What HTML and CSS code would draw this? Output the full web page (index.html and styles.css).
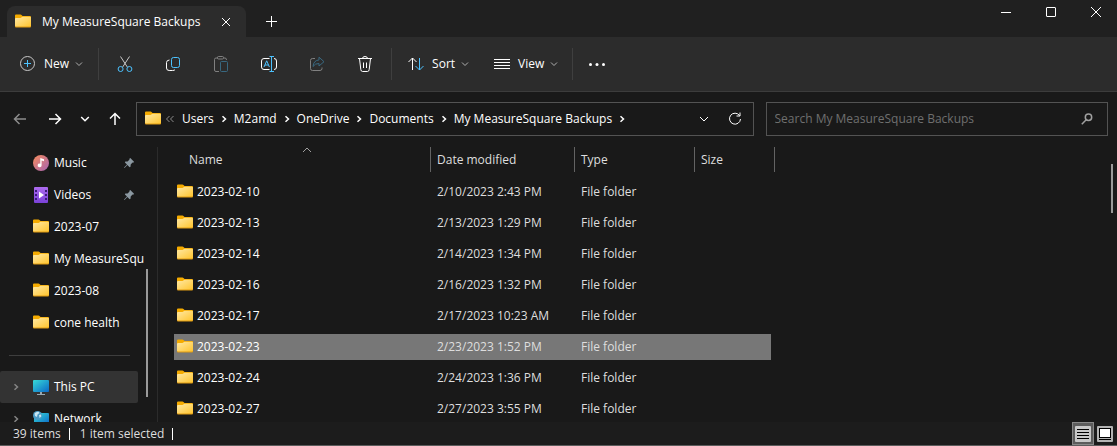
FILE: index.html
```html
<!DOCTYPE html>
<html lang="en">

<head>
    <meta charset="UTF-8">
    <meta name="viewport" content="width=device-width, initial-scale=1.0">
    <title>My MeasureSquare Backups</title>
    <link rel="stylesheet" href="styles.css">
</head>

<body>
    <!-- Shared icons -->
    <svg class="sprite" aria-hidden="true">
        <defs>
            <linearGradient id="folder-front" x1="0" y1="0" x2="1" y2="1">
                <stop offset="0" stop-color="#ffe9a6" />
                <stop offset="1" stop-color="#ffc52f" />
            </linearGradient>
            <linearGradient id="screen" x1="0" y1="0" x2="1" y2="1">
                <stop offset="0" stop-color="#37dbd7" />
                <stop offset="1" stop-color="#0b68c8" />
            </linearGradient>
            <linearGradient id="music-disc" x1="0" y1="0" x2="1" y2="1">
                <stop offset="0" stop-color="#f78c5c" />
                <stop offset="1" stop-color="#a763b2" />
            </linearGradient>
            <linearGradient id="film" x1="0" y1="0" x2="0" y2="1">
                <stop offset="0" stop-color="#ad6bf0" />
                <stop offset="1" stop-color="#7a41d8" />
            </linearGradient>
        </defs>
        <symbol id="folder" viewBox="0 0 16 16">
            <path fill="#f5ab00" d="M0 1.500Q0 .5 1 .5H5.500Q6 .5 6.500 1L7.500 2H15Q16 2 16 3V12H0z" />
            <path fill="#e09b12" d="M0 11H16V12.500Q16 13.500 15 13.500H1Q0 13.500 0 12.500z" />
            <path fill="url(#folder-front)" d="M0 5Q0 4 1 4H5.500L7.500 2.700H15Q16 2.700 16 3.700V11.500Q16 12.500 15 12.500H1Q0 12.500 0 11.500z" />
        </symbol>
        <symbol id="chevron-down" viewBox="0 0 10 10">
            <path d="M2 3.500L5 6.500L8 3.500" />
        </symbol>
        <symbol id="chevron-right" viewBox="0 0 10 10">
            <path d="M3.500 2.200L6.500 5L3.500 7.800" />
        </symbol>
        <symbol id="pin" viewBox="0 0 12 12">
            <path fill="#8b98a1" d="M7.300 1L11 4.700L10.300 5.700L9.500 5.600L7.700 7.500L7.500 9.800L6.600 10.200L4.400 8L1.500 11L1 10.500L4 7.600L1.900 5.500L2.300 4.600L4.600 4.400L6.500 2.500L6.400 1.700z" />
        </symbol>
    </svg>

    <header class="titlebar">
        <div class="tab">
            <svg class="icon"><use href="#folder" /></svg>
            <span class="tab-title">My MeasureSquare Backups</span>
            <button class="tab-close" aria-label="Close tab">
                <svg class="line" width="10" height="10" viewBox="0 0 10 10"><path d="M1 1L9 9M9 1L1 9" /></svg>
            </button>
        </div>
        <button class="new-tab" aria-label="New tab">
            <svg class="line" width="11" height="11" viewBox="0 0 11 11"><path d="M5.500 0V11M0 5.500H11" /></svg>
        </button>
        <div class="window-buttons">
            <button aria-label="Minimize">
                <svg class="line" width="10" height="10" viewBox="0 0 10 10"><path d="M0 5.500H10" /></svg>
            </button>
            <button aria-label="Maximize">
                <svg class="line" width="10" height="10" viewBox="0 0 10 10"><rect x=".5" y=".5" width="9" height="9" rx=".5" /></svg>
            </button>
            <button aria-label="Close">
                <svg class="line" width="10" height="10" viewBox="0 0 10 10"><path d="M0 0L10 10M10 0L0 10" /></svg>
            </button>
        </div>
    </header>

    <div class="toolbar">
        <button class="tool-text tool-new">
            <svg class="line" width="16" height="16" viewBox="0 0 16 16">
                <circle cx="7.500" cy="7.500" r="7" stroke="#c8c8c8" />
                <path class="blue" d="M7.500 4V11M4 7.500H11" />
            </svg>
            New
            <svg class="line chevron"><use href="#chevron-down" /></svg>
        </button>
        <button class="tool" aria-label="Cut">
            <svg class="line" width="16" height="16" viewBox="0 0 16 16">
                <path d="M3.500 .5L10.300 11M12.500 .5L5.700 11" stroke="#c8c8c8" />
                <circle class="blue" cx="3.600" cy="13" r="2.500" />
                <circle class="blue" cx="12.400" cy="13" r="2.500" />
            </svg>
        </button>
        <button class="tool" aria-label="Copy">
            <svg class="line" width="16" height="16" viewBox="0 0 16 16">
                <rect class="blue" x="6.500" y="1.500" width="8" height="10" rx="2" />
                <path d="M4.500 4Q1.500 4.200 1.500 6.500V12Q1.500 14.500 4.200 14.500H7.500Q9.700 14.500 10 13.500" />
            </svg>
        </button>
        <button class="tool" aria-label="Paste" disabled>
            <svg class="line" width="16" height="16" viewBox="0 0 16 16">
                <path d="M5 2H3Q1.500 2 1.500 3.500V14Q1.500 15.500 3 15.500H6M10.500 2H12Q13.500 2 13.500 4" />
                <rect x="4.500" y=".5" width="6" height="2.500" rx="1" />
                <rect class="blue" x="7.500" y="5.500" width="7" height="10" rx="1" />
            </svg>
        </button>
        <button class="tool" aria-label="Rename">
            <svg class="line" width="16" height="16" viewBox="0 0 16 16">
                <path d="M8.500 2.500H3Q.5 2.500 .5 5V11Q.5 13.500 3 13.500H8.500M13 2.500Q15.500 2.500 15.500 5V11Q15.500 13.500 13 13.500" />
                <path class="blue" d="M3 11L5.700 4.800L8.400 11M4 9H7.500M8.500 .5H13M10.500 .5V15.500M8.500 15.500H13" />
            </svg>
        </button>
        <button class="tool" aria-label="Share" disabled>
            <svg class="line" width="16" height="16" viewBox="0 0 16 16">
                <path d="M6 2.500H3.500Q1.500 2.500 1.500 4.500V12.500Q1.500 14.500 3.500 14.500H11Q13 14.500 13 12.500V11.500" />
                <path class="blue" d="M10 1.200L15 5.700L10 10V7.500Q6 7.300 4 10.500Q4.500 4.500 10 3.900z" />
            </svg>
        </button>
        <button class="tool" aria-label="Delete">
            <svg class="line" width="16" height="16" viewBox="0 0 16 16">
                <path d="M1 2.500H15M5.500 2.500Q5.500 .5 8 .5T10.500 2.500M2.500 2.700L3.800 13.500Q4 15.500 5.500 15.500H10.500Q12 15.500 12.200 13.500L13.500 2.700M6.500 6.500V12M9.500 6.500V12" />
            </svg>
        </button>
        <button class="tool-text tool-sort">
            <svg class="line" width="16" height="16" viewBox="0 0 16 16">
                <path d="M4.500 14V2M.5 6L4.500 2L8.500 6" />
                <path class="blue" d="M11.500 2V14M7.500 10L11.500 14L15.500 10" />
            </svg>
            Sort
            <svg class="line chevron"><use href="#chevron-down" /></svg>
        </button>
        <button class="tool-text tool-view">
            <svg class="line" width="16" height="16" viewBox="0 0 16 16">
                <path d="M0 3.500H16M0 6.500H16M0 9.500H16M0 12.500H16" />
            </svg>
            View
            <svg class="line chevron"><use href="#chevron-down" /></svg>
        </button>
        <button class="tool" aria-label="See more">
            <svg width="16" height="16" viewBox="0 0 16 16" fill="#fff">
                <circle cx="1.500" cy="8.500" r="1.500" />
                <circle cx="8" cy="8.500" r="1.500" />
                <circle cx="14.500" cy="8.500" r="1.500" />
            </svg>
        </button>
    </div>

    <div class="navigation">
        <div class="nav-buttons">
            <button aria-label="Back" class="dim">
                <svg class="line bold" width="14" height="14" viewBox="0 0 14 14"><path d="M13 7H1.500M6.500 2L1.500 7L6.500 12" /></svg>
            </button>
            <button aria-label="Forward">
                <svg class="line bold" width="14" height="14" viewBox="0 0 14 14"><path d="M1 7H12.500M7.500 2L12.500 7L7.500 12" /></svg>
            </button>
            <button aria-label="Recent locations">
                <svg class="line bold" width="10" height="10" viewBox="0 0 10 10"><path d="M1.200 3L5 6.800L8.800 3" /></svg>
            </button>
            <button aria-label="Up">
                <svg class="line bold" width="14" height="14" viewBox="0 0 14 14"><path d="M7 13V1.500M2 6.500L7 1.500L12 6.500" /></svg>
            </button>
        </div>
        <nav class="address" aria-label="Address">
            <svg class="icon"><use href="#folder" /></svg>
            <svg class="line dim overflow" width="10" height="10" viewBox="0 0 10 10"><path d="M4.500 2L1.500 5L4.500 8M8.500 2L5.500 5L8.500 8" /></svg>
            <a href="#">Users</a>
            <svg class="line separator"><use href="#chevron-right" /></svg>
            <a href="#">M2amd</a>
            <svg class="line separator"><use href="#chevron-right" /></svg>
            <a href="#">OneDrive</a>
            <svg class="line separator"><use href="#chevron-right" /></svg>
            <a href="#">Documents</a>
            <svg class="line separator"><use href="#chevron-right" /></svg>
            <a href="#">My MeasureSquare Backups</a>
            <svg class="line separator"><use href="#chevron-right" /></svg>
            <div class="address-buttons">
                <button aria-label="Previous locations">
                    <svg class="line" width="10" height="10" viewBox="0 0 10 10"><path d="M1 3L5 7L9 3" /></svg>
                </button>
                <button aria-label="Refresh">
                    <svg class="line" width="14" height="14" viewBox="0 0 14 14"><path d="M11.500 3.500A5.500 5.500 0 1 0 12.500 7M12 .5V4H8.500" /></svg>
                </button>
            </div>
        </nav>
        <form class="search">
            <input type="search" aria-label="Search" placeholder="Search My MeasureSquare Backups">
            <button type="button" aria-label="Search">
                <svg class="line" width="12" height="12" viewBox="0 0 12 12" stroke-width="1.500"><circle cx="7.500" cy="4.300" r="3.200" /><path d="M5.200 6.700L.8 11.200" /></svg>
            </button>
        </form>
    </div>

    <div class="content">
        <aside class="sidebar">
            <div class="sidebar-items">
                <a href="#" class="sidebar-item">
                    <svg class="icon" viewBox="0 0 16 16">
                        <circle cx="8" cy="8" r="8" fill="url(#music-disc)" />
                        <path fill="#fff" d="M7.300 3L11 4.300V6.300L8.600 5.500V10.500A2 1.800 0 1 1 7.300 8.800z" />
                    </svg>
                    <span>Music</span>
                    <svg class="pin"><use href="#pin" /></svg>
                </a>
                <a href="#" class="sidebar-item">
                    <svg class="icon" viewBox="0 0 16 16">
                        <rect x="1" width="14" height="16" rx="1" fill="url(#film)" />
                        <path fill="#3c1b7c" d="M2 3H4V5H2zM2 7H4V9H2zM2 11H4V13H2zM12 3H14V5H12zM12 7H14V9H12zM12 11H14V13H12z" />
                        <path fill="#fff" d="M6 4.500L11 8L6 11.500z" />
                    </svg>
                    <span>Videos</span>
                    <svg class="pin"><use href="#pin" /></svg>
                </a>
                <a href="#" class="sidebar-item">
                    <svg class="icon"><use href="#folder" /></svg>
                    <span>2023-07</span>
                </a>
                <a href="#" class="sidebar-item">
                    <svg class="icon"><use href="#folder" /></svg>
                    <span>My MeasureSqu</span>
                </a>
                <a href="#" class="sidebar-item">
                    <svg class="icon"><use href="#folder" /></svg>
                    <span>2023-08</span>
                </a>
                <a href="#" class="sidebar-item">
                    <svg class="icon"><use href="#folder" /></svg>
                    <span>cone health</span>
                </a>
                <hr>
                <a href="#" class="sidebar-item root active">
                    <svg class="line expand"><use href="#chevron-right" /></svg>
                    <svg class="icon" viewBox="0 0 16 16">
                        <path fill="#9aa7b0" d="M7 13H9V15H12V16H4V15H7z" />
                        <rect y="1" width="16" height="12" rx="1" fill="url(#screen)" />
                    </svg>
                    <span>This PC</span>
                </a>
                <a href="#" class="sidebar-item root">
                    <svg class="line expand"><use href="#chevron-right" /></svg>
                    <svg class="icon" viewBox="0 0 16 16">
                        <path fill="#9aa7b0" d="M7 13H9V15H12V16H4V15H7z" />
                        <rect x="1" y="2" width="15" height="11" rx="1" fill="url(#screen)" />
                        <circle cx="4.500" cy="4.500" r="4.500" fill="#4b9ac5" />
                        <path fill="#c9e6f2" d="M1.500 2.500Q3 .5 5.500 .7L6.500 2L4.500 3.500L4 6L2 5zM6 4L8 3.500L8.300 5.500L6.500 7z" />
                    </svg>
                    <span>Network</span>
                </a>
            </div>
            <div class="sidebar-track"><div class="thumb"></div></div>
        </aside>

        <main class="files">
            <table>
                <thead>
                    <tr>
                        <th class="col-name">
                            Name
                            <svg class="line sort-mark" width="10" height="6" viewBox="0 0 10 6"><path d="M1 5L5 1L9 5" /></svg>
                        </th>
                        <th class="col-date">Date modified</th>
                        <th class="col-type">Type</th>
                        <th class="col-size">Size</th>
                    </tr>
                </thead>
                <tbody>
                    <tr>
                        <td><div class="name"><svg class="icon"><use href="#folder" /></svg>2023-02-10</div></td>
                        <td>2/10/2023 2:43 PM</td>
                        <td>File folder</td>
                        <td></td>
                    </tr>
                    <tr>
                        <td><div class="name"><svg class="icon"><use href="#folder" /></svg>2023-02-13</div></td>
                        <td>2/13/2023 1:29 PM</td>
                        <td>File folder</td>
                        <td></td>
                    </tr>
                    <tr>
                        <td><div class="name"><svg class="icon"><use href="#folder" /></svg>2023-02-14</div></td>
                        <td>2/14/2023 1:34 PM</td>
                        <td>File folder</td>
                        <td></td>
                    </tr>
                    <tr>
                        <td><div class="name"><svg class="icon"><use href="#folder" /></svg>2023-02-16</div></td>
                        <td>2/16/2023 1:32 PM</td>
                        <td>File folder</td>
                        <td></td>
                    </tr>
                    <tr>
                        <td><div class="name"><svg class="icon"><use href="#folder" /></svg>2023-02-17</div></td>
                        <td>2/17/2023 10:23 AM</td>
                        <td>File folder</td>
                        <td></td>
                    </tr>
                    <tr class="selected">
                        <td><div class="name"><svg class="icon"><use href="#folder" /></svg>2023-02-23</div></td>
                        <td>2/23/2023 1:52 PM</td>
                        <td>File folder</td>
                        <td></td>
                    </tr>
                    <tr>
                        <td><div class="name"><svg class="icon"><use href="#folder" /></svg>2023-02-24</div></td>
                        <td>2/24/2023 1:36 PM</td>
                        <td>File folder</td>
                        <td></td>
                    </tr>
                    <tr>
                        <td><div class="name"><svg class="icon"><use href="#folder" /></svg>2023-02-27</div></td>
                        <td>2/27/2023 3:55 PM</td>
                        <td>File folder</td>
                        <td></td>
                    </tr>
                </tbody>
            </table>
            <div class="files-track"><div class="thumb"></div></div>
        </main>
    </div>

    <footer class="statusbar">
        <span class="status">39 items</span>
        <span class="status">1 item selected</span>
        <div class="layout-buttons">
            <button class="pressed" aria-label="Details view">
                <svg width="16" height="16" viewBox="0 0 16 16">
                    <rect width="16" height="16" rx="1" fill="#c8c8c8" />
                    <path stroke="#000" d="M2 3.500H14M2 6.500H14M2 9.500H14M2 12.500H14" />
                </svg>
            </button>
            <button aria-label="Large icons view">
                <svg width="16" height="16" viewBox="0 0 16 16">
                    <rect width="16" height="16" rx="1" fill="#b4b4b4" />
                    <rect x="2.500" y="2.500" width="11" height="9" fill="#fff" stroke="#000" />
                    <path stroke="#000" d="M2 13.500H14" />
                </svg>
            </button>
        </div>
    </footer>
</body>

</html>
```
FILE: styles.css
```css
:root {
    --background: #191919;
    --titlebar: #202020;
    --toolbar: #2c2c2c;
    --border: #535353;
    --text: #ffffff;
    --muted: #8c8c8c;
    --blue: #4cc2ff;
}

* {
    box-sizing: border-box;
}

body {
    margin: 0;
    height: 100vh;
    display: flex;
    flex-direction: column;
    overflow: hidden;
    background-color: var(--background);
    color: var(--text);
    font-family: "Open Sans", "Noto Sans", sans-serif;
    font-size: 12px;
    line-height: 16px;
}

button {
    display: flex;
    align-items: center;
    justify-content: center;
    padding: 0;
    border: 0;
    background: none;
    color: inherit;
    font: inherit;
}

a {
    color: inherit;
    text-decoration: none;
}

.sprite {
    position: absolute;
    width: 0;
    height: 0;
}

.icon {
    width: 16px;
    height: 16px;
    flex: none;
}

.line {
    flex: none;
    fill: none;
    stroke: currentColor;
}

.bold {
    stroke-width: 1.5;
}

.blue {
    stroke: var(--blue);
}

.dim {
    color: var(--muted);
}

/* Title bar */
.titlebar {
    display: flex;
    height: 37px;
    flex: none;
    padding-left: 7px;
    background-color: var(--titlebar);
}

.tab {
    display: flex;
    align-items: center;
    width: 239px;
    margin-top: 6px;
    padding: 0 8px;
    border-radius: 8px 8px 0 0;
    background-color: var(--toolbar);
    font-weight: 500;
}

.tab-title {
    flex: 1;
    padding-left: 11px;
    white-space: nowrap;
}

.tab-close {
    width: 24px;
    height: 24px;
}

.new-tab {
    width: 33px;
    margin-top: 6px;
    margin-left: 9px;
}

.window-buttons {
    display: flex;
    gap: 3px;
    margin-left: auto;
}

.window-buttons button {
    width: 42px;
    height: 24px;
}

/* Toolbar */
.toolbar {
    display: flex;
    align-items: center;
    height: 55px;
    flex: none;
    border-bottom: 1px solid #3c3c3c;
    background-color: var(--toolbar);
}

.toolbar button {
    height: 32px;
}

.tool {
    width: 48px;
}

.tool:disabled {
    opacity: 0.4;
}

.tool-text {
    gap: 8px;
    font-weight: 500;
}

.tool-new {
    padding: 0 14px 0 20px;
    margin-right: 2px;
    border-right: 1px solid #3f3f3f;
}

.tool-sort {
    padding: 0 12px 0 16px;
    border-left: 1px solid #3f3f3f;
    margin-left: 2px;
}

.tool-view {
    padding: 0 13px 0 12px;
    border-right: 1px solid #3f3f3f;
}

.chevron {
    width: 10px;
    height: 10px;
    margin-left: -3px;
    color: #b0b0b0;
}

/* Navigation */
.navigation {
    display: flex;
    flex: none;
    padding: 10px 9px 11px 2px;
}

.nav-buttons {
    display: grid;
    grid-template-columns: 35px 35px 25px 35px;
    margin-right: 4px;
}

.address,
.search {
    display: flex;
    align-items: center;
    height: 34px;
    min-width: 0;
    border: 1px solid var(--border);
}

.address {
    flex: 17;
    padding: 0 6px 0 8px;
    white-space: nowrap;
}

.overflow {
    margin: 0 7px 0 4px;
}

.separator {
    width: 10px;
    height: 10px;
    margin: 0 5px;
    stroke-width: 1.5;
}

.address-buttons {
    display: flex;
    margin-left: auto;
}

.address-buttons button {
    width: 38px;
    height: 32px;
}

.address-buttons button:last-child {
    width: 24px;
}

.search {
    flex: 9;
    margin-left: 12px;
    padding: 0 14px 0 8px;
    color: #a0a0a0;
}

.search input {
    flex: 1;
    min-width: 0;
    padding: 0;
    border: 0;
    outline: 0;
    background: none;
    color: var(--text);
    font: inherit;
}

.search input::placeholder {
    color: #6f6f6f;
}

/* Content */
.content {
    display: flex;
    flex: 1;
    min-height: 0;
}

.sidebar {
    display: flex;
    width: 158px;
    flex: none;
    overflow: hidden;
    border-right: 1px solid #2b2b2b;
}

.sidebar-items {
    width: 138px;
    flex: none;
}

.sidebar-item {
    display: flex;
    align-items: center;
    height: 32px;
    padding: 0 3px 0 33px;
    white-space: nowrap;
}

.sidebar-item span {
    flex: 1;
    padding-left: 5px;
}

.sidebar-item.root {
    padding-left: 11px;
}

.sidebar-item.active {
    border-radius: 2px;
    background-color: #333333;
}

.sidebar hr {
    margin: 16px 8px 15px 9px;
    border: 0;
    border-top: 1px solid #3e3e3e;
}

.pin {
    width: 12px;
    height: 12px;
}

.expand {
    width: 10px;
    height: 12px;
    margin-right: 12px;
    color: #858585;
    stroke-width: 1.5;
}

.sidebar-track {
    padding: 122px 0 25px 8px;
}

.thumb {
    width: 2px;
    height: 100%;
    background-color: #9a9a9a;
}

.files {
    display: flex;
    flex: 1;
    justify-content: space-between;
    min-width: 0;
    overflow: hidden;
    padding-left: 16px;
}

.files-track {
    padding: 17px 4px 0 0;
}

.files-track .thumb {
    height: 49px;
}

table {
    width: 601px;
    align-self: flex-start;
    table-layout: fixed;
    border-spacing: 0;
}

th {
    height: 25px;
    padding: 0 6px;
    border-right: 1px solid #636363;
    color: #dedede;
    font-weight: 400;
    text-align: left;
}

thead::after {
    content: "";
    display: block;
    height: 5px;
}

td {
    height: 31px;
    padding: 0 6px;
    border: solid transparent;
    border-width: 2px 0 3px;
    background-clip: padding-box;
    color: #dedede;
}

td:last-child {
    border-right-width: 4px;
}

td:first-child {
    padding-left: 3px;
    color: var(--text);
}

.col-name {
    position: relative;
    width: 257px;
    padding-left: 15px;
}

.col-date {
    width: 144px;
}

.col-type {
    width: 120px;
}

.col-size {
    width: 80px;
}

.sort-mark {
    position: absolute;
    top: 0;
    left: 50%;
    color: #a0a0a0;
}

.name {
    display: flex;
    align-items: center;
    gap: 4px;
}

.selected td {
    background-color: #777777;
}

/* Status bar */
.statusbar {
    display: flex;
    align-items: center;
    height: 24px;
    flex: none;
    padding: 0 4px 0 3px;
    border-bottom: 1px solid #5c5c5c;
    background-color: #1c1c1c;
    color: #dedede;
}

.status {
    padding: 0 9px 0 10px;
    position: relative;
}

.status::after {
    content: "";
    position: absolute;
    top: 2px;
    right: 0;
    width: 1px;
    height: 12px;
    background-color: var(--text);
}

.layout-buttons {
    display: flex;
    gap: 3px;
    margin-left: auto;
}

.layout-buttons .pressed {
    width: 22px;
    height: 23px;
    border: 1px solid #888888;
    background-color: #5c5c5c;
}
```
